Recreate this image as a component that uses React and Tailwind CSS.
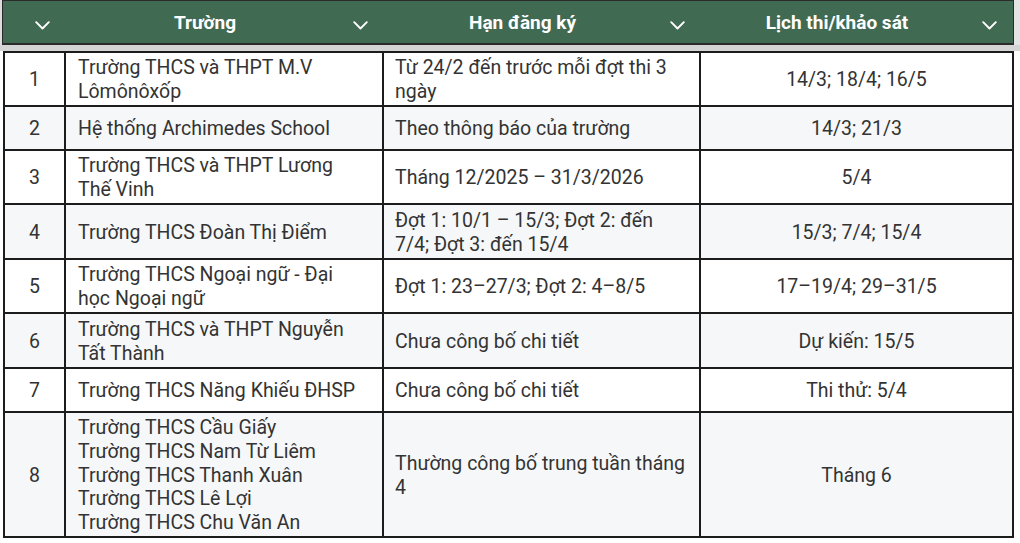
import React from "react";

const rows = [
  { n: "1", h: "h-[54px]", a: ["Trường THCS và THPT M.V", "Lômônôxốp"], b: ["Từ 24/2 đến trước mỗi đợt thi 3", "ngày"], c: "14/3; 18/4; 16/5" },
  { n: "2", h: "h-[44px]", a: ["Hệ thống Archimedes School"], b: ["Theo thông báo của trường"], c: "14/3; 21/3" },
  { n: "3", h: "h-[54px]", a: ["Trường THCS và THPT Lương", "Thế Vinh"], b: ["Tháng 12/2025 – 31/3/2026"], c: "5/4" },
  { n: "4", h: "h-[55px]", a: ["Trường THCS Đoàn Thị Điểm"], b: ["Đợt 1: 10/1 – 15/3; Đợt 2: đến", "7/4; Đợt 3: đến 15/4"], c: "15/3; 7/4; 15/4" },
  { n: "5", h: "h-[54px]", a: ["Trường THCS Ngoại ngữ - Đại", "học Ngoại ngữ"], b: ["Đợt 1: 23–27/3; Đợt 2: 4–8/5"], c: "17–19/4; 29–31/5" },
  { n: "6", h: "h-[55px]", a: ["Trường THCS và THPT Nguyễn", "Tất Thành"], b: ["Chưa công bố chi tiết"], c: "Dự kiến: 15/5" },
  { n: "7", h: "h-[44px]", a: ["Trường THCS Năng Khiếu ĐHSP"], b: ["Chưa công bố chi tiết"], c: "Thi thử: 5/4" },
  {
    n: "8",
    h: "h-[125px]",
    a: ["Trường THCS Cầu Giấy", "Trường THCS Nam Từ Liêm", "Trường THCS Thanh Xuân", "Trường THCS Lê Lợi", "Trường THCS Chu Văn An"],
    b: ["Thường công bố trung tuần tháng", "4"],
    c: "Tháng 6",
  },
];

function Chevron() {
  return (
    <svg width="15" height="9" viewBox="0 0 15 9" fill="none">
      <polyline points="1.2,1.2 7.5,7.5 13.8,1.2" stroke="white" strokeWidth="1.9" strokeLinecap="round" strokeLinejoin="round" />
    </svg>
  );
}

function HeadCell({ label, w }) {
  return (
    <div className={`${w} flex items-center h-full`}>
      <div className="flex-1 text-center pl-[8px] pt-[3px] text-white font-bold text-[19px] whitespace-nowrap">{label}</div>
      <div className="w-[48px] flex justify-center pt-[6px]">
        <Chevron />
      </div>
    </div>
  );
}

function Lines({ lines }) {
  return (
    <div className="flex flex-col">
      {lines.map((l, i) => (
        <span key={i} className="whitespace-nowrap">{l}</span>
      ))}
    </div>
  );
}

export default function App() {
  return (
    <div className="w-[1020px] h-[543px] bg-white overflow-hidden font-['Roboto','Liberation_Sans',sans-serif]">
      <div className="flex h-[45px] bg-[#dcdcdc]">
        <div className="w-[2px]" />
        <div className="w-[1012px] h-full bg-[#416a53] border border-[#2b2b2b] border-b-2 flex">
          <HeadCell label="" w="w-[63px]" />
          <HeadCell label="Trường" w="w-[318px]" />
          <HeadCell label="Hạn đăng ký" w="w-[317px]" />
          <HeadCell label="Lịch thi/khảo sát" w="w-[312px]" />
        </div>
        <div className="flex-1 bg-[#e4e4e4]" />
      </div>
      <div className="h-[6px] bg-[#d4d4d4]" />
      <div className="ml-[3px] w-[1011px] border-t-2 border-l-2 border-[#1c1c1c] text-[19.5px] leading-[23.75px] text-[#333333]">
        {rows.map((r, i) => (
          <div key={r.n} className={`flex ${r.h} ${i % 2 === 1 ? "bg-[#f6f7f9]" : "bg-white"}`}>
            <div className="w-[61px] border-r-2 border-b-2 border-[#1c1c1c] flex items-center justify-center pt-[2px]">{r.n}</div>
            <div className="w-[318px] border-r-2 border-b-2 border-[#1c1c1c] flex items-center pl-[12px] pt-[2px]">
              <Lines lines={r.a} />
            </div>
            <div className="w-[317px] border-r-2 border-b-2 border-[#1c1c1c] flex items-center pl-[11px] pt-[2px]">
              <Lines lines={r.b} />
            </div>
            <div className="w-[313px] border-r-2 border-b-2 border-[#1c1c1c] flex items-center justify-center pt-[2px]">{r.c}</div>
          </div>
        ))}
      </div>
    </div>
  );
}
